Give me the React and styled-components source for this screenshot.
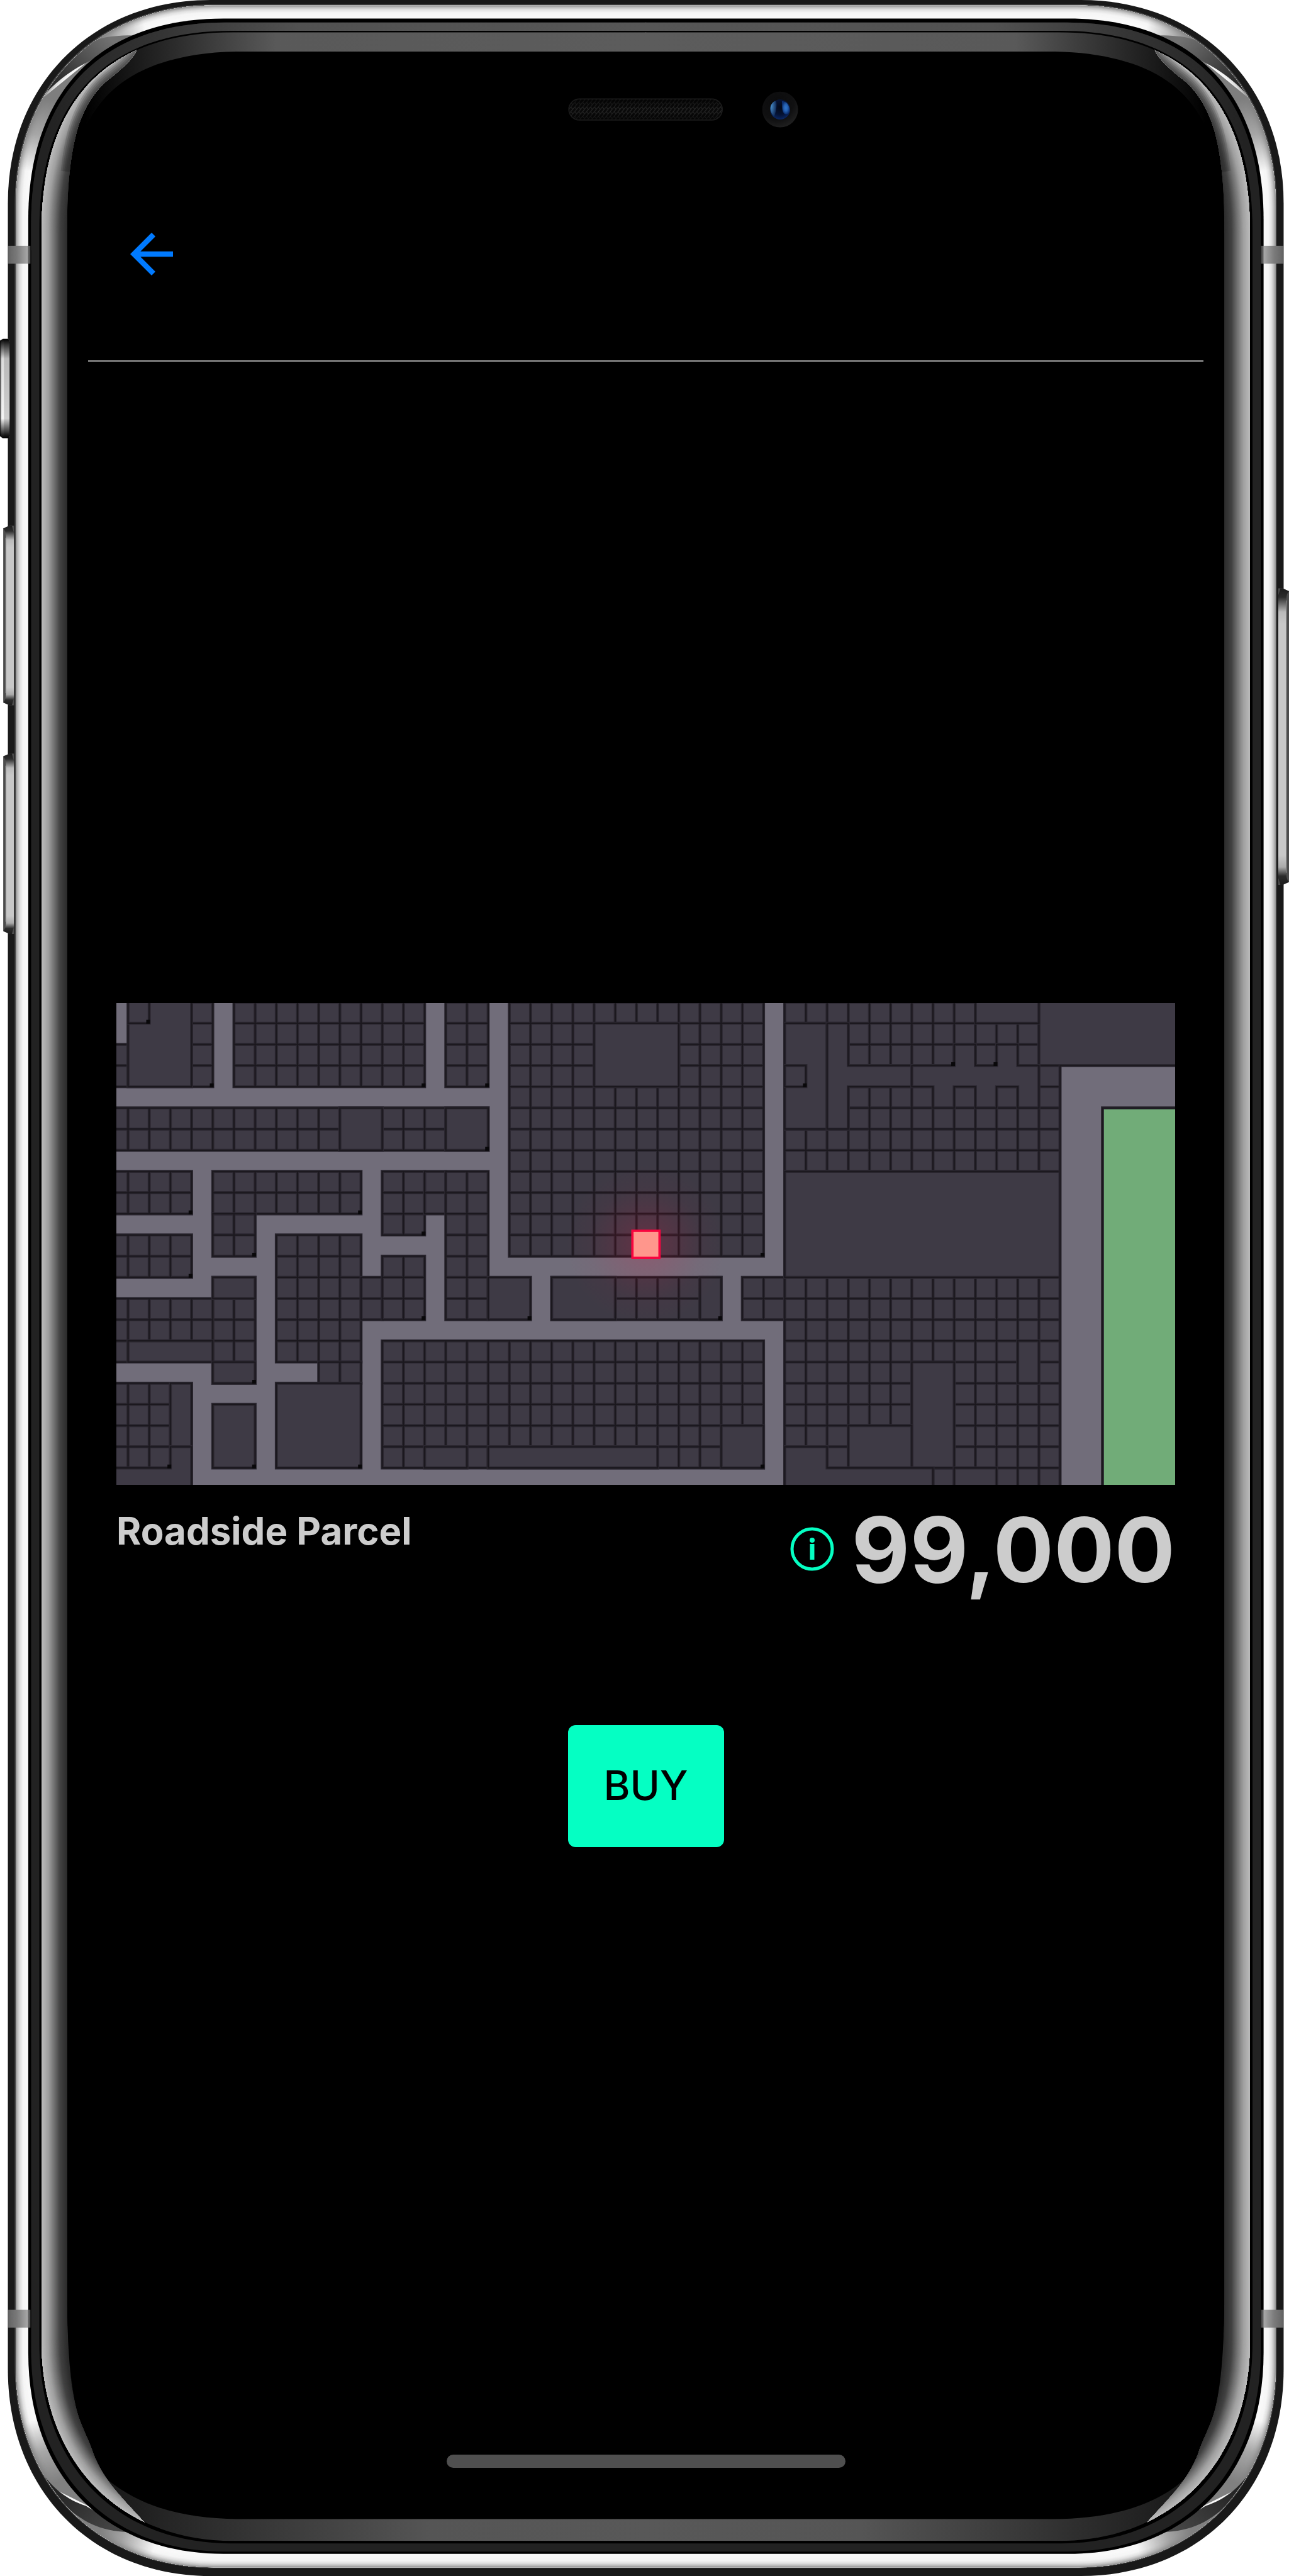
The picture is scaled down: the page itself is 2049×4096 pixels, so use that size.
import React from "react";
import styled, { createGlobalStyle } from "styled-components";

const GlobalStyle = createGlobalStyle`
  * { box-sizing: border-box; }
  body { margin: 0; background: #ffffff; font-family: Inter, "Liberation Sans", sans-serif; }
`;

const Device = styled.div`
  position: relative;
  width: 100%;
  min-height: 100vh;
  display: flex;
  overflow: hidden;
`;

const BezelArt = styled.svg`
  position: absolute;
  inset: 0;
  width: 100%;
  height: 100%;
`;

const Screen = styled.div`
  position: relative;
  flex: 1;
  display: flex;
  flex-direction: column;
  padding: 0 136px 172px 140px;
`;

const Header = styled.header`
  display: flex;
  padding: 353px 50px 118px;
  border-bottom: 2px solid #a2a2a2;
`;

const BackButton = styled.button`
  display: block;
  width: 102px;
  height: 102px;
  padding: 0;
  border: 0;
  background: none;
  color: #007aff;
  cursor: pointer;

  svg { display: block; width: 100%; height: 100%; }
`;

const Main = styled.main`
  flex: 1;
  display: flex;
  flex-direction: column;
  justify-content: center;
  padding: 54px 45px 0;
`;

const MapArt = styled.svg`
  display: block;
  width: 100%;
  height: auto;
`;

const Summary = styled.div`
  display: flex;
  justify-content: space-between;
  align-items: flex-start;
  padding-top: 16px;
`;

const ParcelName = styled.h1`
  margin: 0;
  padding-top: 21px;
  color: #cccccc;
  font-size: 60px;
  font-weight: 700;
  line-height: 72px;
`;

const PriceGroup = styled.div`
  display: flex;
  align-items: center;
  gap: 27px;
`;

const InfoButton = styled.button`
  width: 72px;
  height: 72px;
  padding: 0;
  border: 0;
  background: none;
  color: #05ffc3;
  cursor: pointer;

  svg { display: block; width: 100%; height: 100%; }
`;

const Price = styled.span`
  color: #cccccc;
  font-size: 143px;
  font-weight: 700;
  line-height: 174px;
`;

const BuyButton = styled.button`
  align-self: center;
  margin-top: 192px;
  width: 248px;
  height: 194px;
  padding: 0 0 2px;
  border: 0;
  border-radius: 12px;
  background: #05ffc3;
  color: #000000;
  font-family: inherit;
  font-size: 64px;
  font-weight: 500;
  line-height: 76px;
  cursor: pointer;
`;

const HomeIndicator = styled.div`
  align-self: center;
  width: 634px;
  height: 21px;
  border-radius: 11px;
  background: #4f4f4f;
`;

/* ---------- parcel map, drawn in grid-cell units ---------- */

const ROAD = "#716d7a";
const LAND = "#3e3a45";

const gridBlocks = [
  [-1, -1, 4, 3], [5, -1, 14, 3], [15, -1, 17, 3], [-1, 4, 17, 6],
  [-1, 7, 3, 9], [4, 7, 11, 9], [4, 9, 6, 11], [12, 7, 14, 10], [14, 7, 15, 9], [15, 7, 17, 14],
  [-1, 10, 3, 12], [4, 12, 6, 17], [-1, 13, 4, 16],
  [7, 10, 11, 16], [9, 16, 11, 17], [11, 12, 12, 14], [12, 11, 14, 14],
  [-1, 17, 3, 23], [12, 15, 30, 21], [18, -1, 30, 11], [20, 12, 28, 14],
  [29, 12, 31, 14], [31, -1, 44, 23],
];

const box = (a, b, c, d) => `M${a} ${b}H${c}V${d}H${a}Z`;

const merged = [
  box(0, -2, 3, 3), box(0, -2, 1, 0),
  box(10, 4, 12, 6), box(15, 4, 17, 6), box(17, 12, 19, 14),
  box(4, 12, 6, 13), box(0, 15, 4, 16), box(4, 16, 6, 17),
  box(7, 17, 11, 21), box(2, 17, 3, 20), "M-2 21H2V20H3V24H-2Z", box(4, 18, 6, 21),
  box(14, 20, 16, 21), box(17, 20, 25, 21), box(28, 19, 30, 21),
  box(22, 0, 26, 3), box(20, 12, 23, 14), box(27, 12, 28, 14),
  box(43, -2, 51, 2), box(40, -2, 43, 0),
  box(31, 0, 33, 5), box(31, 2, 32, 3),
  "M33 0H34V2H37V3H34V5H33Z",
  "M37 2H39V1H40V2H41V1H42V2H43V4H42V3H41V4H40V3H39V4H38V3H37Z",
  box(31, 7, 44, 12),
  box(37, 16, 39, 21), box(42, 15, 43, 17), box(34, 19, 37, 21),
  "M31 20H33V21H38V24H31Z", box(39, 21, 41, 24),
];

const notches = [
  [1, 0], [4, 3], [14, 3], [17, 3], [17, 6], [3, 9], [11, 9], [14, 10], [6, 11], [3, 12],
  [14, 14], [6, 17], [2, 21], [6, 21], [11, 21], [30, 11], [19, 14], [28, 14], [30, 21],
  [32, 3], [39, 2], [41, 2],
];

const gridPath = ([x0, y0, x1, y1]) => {
  let d = "";
  for (let x = x0; x <= x1; x += 1) d += `M${x} ${y0}V${y1}`;
  for (let y = y0; y <= y1; y += 1) d += `M${x0} ${y}H${x1}`;
  return d;
};

function Lines({ d, fill = "none" }) {
  return (
    <>
      <path d={d} fill={fill} stroke="#2b2730" strokeWidth="0.14" strokeLinecap="square" />
      <path d={d} fill="none" stroke="#1b181e" strokeWidth="0.06" strokeLinecap="square" />
    </>
  );
}

function ParcelMap() {
  return (
    <MapArt viewBox="-0.55 -0.95 49.98 22.77" role="img" aria-label="Parcel location map">
      <defs>
        <radialGradient id="glow">
          <stop offset="0" stopColor="#ff1045" stopOpacity="0.2" />
          <stop offset="0.35" stopColor="#f01045" stopOpacity="0.11" />
          <stop offset="0.7" stopColor="#e01045" stopOpacity="0.03" />
          <stop offset="1" stopColor="#e01045" stopOpacity="0" />
        </radialGradient>
      </defs>
      <rect x="-1" y="-1" width="51" height="23" fill={ROAD} />
      {gridBlocks.map((b) => (
        <rect key={b.join()} x={b[0]} y={b[1]} width={b[2] - b[0]} height={b[3] - b[1]} fill={LAND} />
      ))}
      {gridBlocks.map((b) => <Lines key={b.join()} d={gridPath(b)} />)}
      {merged.map((d) => <Lines key={d} d={d} fill={LAND} />)}
      <path d="M-1 -1H-0.07V0.93H-1Z" fill={ROAD} />
      <path d="M44 2H51V4H46V23H44Z" fill={ROAD} />
      <Lines d="M44 23V2H51" />
      <rect x="46" y="4" width="5" height="20" fill="#71ac78" />
      <Lines d="M46 23V4H51" />
      {notches.map(([x, y]) => (
        <rect key={`${x},${y}`} x={x - 0.14} y={y - 0.16} width="0.18" height="0.18" fill="#09080a" />
      ))}
      <circle cx="24.45" cy="10.44" r="3.8" fill="url(#glow)" />
      <rect x="23.81" y="9.8" width="1.28" height="1.28" fill="#ff968c" stroke="#f8053f" strokeWidth="0.11" />
    </MapArt>
  );
}

/* ---------- phone body ---------- */

const shell = (l, t, r, b, rx, ryTop, ryBottom, topFullness, bottomFullness) => {
  const kt = 1 - topFullness;
  const kb = 1 - bottomFullness;
  return [
    `M${l + rx} ${t}H${r - rx}`,
    `C${r - rx * kt} ${t} ${r} ${t + ryTop * kt} ${r} ${t + ryTop}`,
    `V${b - ryBottom}`,
    `C${r} ${b - ryBottom * kb} ${r - rx * kb} ${b} ${r - rx} ${b}`,
    `H${l + rx}`,
    `C${l + rx * kb} ${b} ${l} ${b - ryBottom * kb} ${l} ${b - ryBottom}`,
    `V${t + ryTop}`,
    `C${l} ${t + ryTop * kt} ${l + rx * kt} ${t} ${l + rx} ${t}Z`,
  ].join("");
};

const outer = shell(22, 0, 3587, 7199, 566, 568, 578, 0.585, 0.585);
const steelRim = shell(41, 12, 3568, 7177, 556, 560, 568, 0.59, 0.59);
const steel = shell(44, 15, 3565, 7175, 554, 560, 566, 0.59, 0.59);
const steelInner = shell(79, 52, 3531, 7137, 546, 562, 562, 0.635, 0.61);
const ring = shell(87, 63, 3523, 7131, 542, 560, 562, 0.64, 0.605);
const ringInner = shell(110, 86, 3500, 7108, 536, 556, 560, 0.65, 0.605);
const glass = shell(116, 90, 3493, 7101, 536, 560, 560, 0.66, 0.6);

const MIRROR = "translate(3609 0) scale(-1 1)";

const gray = (v) => `rgb(${v},${v},${v})`;
/* grey levels from the inner end of a bevel out to its edge */
const ramp = (stops, n) =>
  Array.from({ length: n }, (_, i) => {
    const t = 1 - i / (n - 1);
    const j = Math.max(1, stops.findIndex((s) => s[0] >= t));
    const [t0, v0] = stops[j - 1];
    const [t1, v1] = stops[j];
    return Math.round(v0 + ((v1 - v0) * (t - t0)) / (t1 - t0));
  });

const steelRamp = ramp([[0, 150], [0.15, 190], [0.35, 225], [0.6, 245], [1, 249]], 24);
const sheenRamp = ramp([[0, 186], [0.25, 160], [0.5, 112], [0.72, 66], [1, 44]], 48);

function NestedStrokes({ d, depth, values }) {
  return values.map((v, i) => (
    <path key={i} d={d} fill="none" stroke={gray(v)} strokeWidth={2 * depth * (1 - i / values.length)} />
  ));
}

const sheenTopEdge = "M384 134C378 158 345 190 302 223C262 255 230 310 214 370C205 405 199 440 195 480";
const sheenSide =
  "M100 3600V90H384V134C378 158 345 190 302 223C262 255 230 310 214 370C196 440 188 520 188 620V6440C189 6560 196 6690 222 6760C240 6808 250 6822 262 6860C290 6930 330 6970 411 7057L400 7110H100Z";

const screenGlass =
  "M660 144H2949C3077 146 3190 175 3261 226C3370 300 3421 440 3421 640V6440C3421 6700 3380 6850 3308 6930C3220 7010 3080 7040 2946 7040H663C520 7038 400 7010 301 6930C230 6850 188 6700 188 6440V640C188 440 239 300 348 226C420 175 530 146 660 144Z";

function SteelCorner() {
  return (
    <>
      <path d="M30 490H260V160L100 290L30 300Z" fill="url(#steelTopSide)" />
      <path d="M420 0V140H230L150 230L120 200L200 40Z" fill="url(#steelTopEdge)" />
      <path d="M90 300C130 255 180 205 240 176L380 99C300 98 262 108 225 135C190 160 150 200 110 240Z" fill="url(#facetTop)" />
      <path d="M30 6750H300V7030L120 6940L30 6900Z" fill="url(#steelBottomSide)" />
      <path d="M440 7199V7040H230L170 6990L150 7040L240 7180Z" fill="url(#steelBottomEdge)" />
      <path d="M112 6905C150 6955 185 6985 240 7003L360 7076C280 7075 225 7045 176 6996Z" fill="url(#facetBottom)" />
    </>
  );
}

function Sheen() {
  return (
    <g clipPath="url(#sheenClip)">
      <path d={sheenSide} fill="#2c2c2c" />
      <NestedStrokes d={glass} depth={72} values={sheenRamp} />
      {[50, 40, 30, 20, 10].map((w) => (
        <path key={w} d={sheenTopEdge} fill="none" stroke="#2c2c2c" strokeOpacity="0.18" strokeWidth={w} />
      ))}
    </g>
  );
}

function SideButton({ x, y, height, flip }) {
  const w = 30;
  return (
    <g transform={flip ? `translate(${x + w} ${y}) scale(-1 1)` : `translate(${x} ${y})`}>
      <path d={`M0 8L18 0H${w}V${height}H18L0 ${height - 8}Z`} fill="#4c4c4c" />
      <path d={`M0 8C6 14 8 24 8 40V${height - 40}C8 ${height - 24} 6 ${height - 14} 0 ${height - 8}L18 ${height}H24L30 ${height - 20}V20L24 0H18Z`} fill="url(#keyFace)" />
      <rect x="6" y="34" width="2" height={height - 68} fill="#8c8c8c" />
    </g>
  );
}

function Bezel() {
  return (
    <BezelArt viewBox="0 0 3602 7199" preserveAspectRatio="none" aria-hidden="true">
      <defs>
        <clipPath id="steelClip"><path d={steel} /></clipPath>
        <clipPath id="glassClip"><path d={glass} /></clipPath>
        <clipPath id="sheenClip"><path d={sheenSide} /></clipPath>
        <clipPath id="topLeft"><rect x="0" y="0" width="1806" height="700" /></clipPath>
        <linearGradient id="steelTopSide" gradientUnits="userSpaceOnUse" x1="85" y1="480" x2="135" y2="275">
          <stop offset="0" stopColor="#808080" stopOpacity="0" />
          <stop offset="0.5" stopColor="#848484" stopOpacity="0.7" />
          <stop offset="1" stopColor="#7e7e7e" />
        </linearGradient>
        <linearGradient id="steelTopEdge" gradientUnits="userSpaceOnUse" x1="400" y1="60" x2="240" y2="110">
          <stop offset="0" stopColor="#808080" stopOpacity="0" />
          <stop offset="0.6" stopColor="#848484" stopOpacity="0.75" />
          <stop offset="1" stopColor="#7e7e7e" />
        </linearGradient>
        <linearGradient id="facetTop" gradientUnits="userSpaceOnUse" x1="120" y1="270" x2="300" y2="100">
          <stop offset="0" stopColor="#191919" />
          <stop offset="0.4" stopColor="#3a3a3a" />
          <stop offset="1" stopColor="#727272" />
        </linearGradient>
        <linearGradient id="steelBottomSide" gradientUnits="userSpaceOnUse" x1="90" y1="6765" x2="150" y2="6940">
          <stop offset="0" stopColor="#808080" stopOpacity="0" />
          <stop offset="0.5" stopColor="#848484" stopOpacity="0.7" />
          <stop offset="1" stopColor="#808080" />
        </linearGradient>
        <linearGradient id="steelBottomEdge" gradientUnits="userSpaceOnUse" x1="430" y1="7125" x2="280" y2="7070">
          <stop offset="0" stopColor="#808080" stopOpacity="0" />
          <stop offset="0.6" stopColor="#868686" stopOpacity="0.75" />
          <stop offset="1" stopColor="#808080" />
        </linearGradient>
        <linearGradient id="facetBottom" gradientUnits="userSpaceOnUse" x1="130" y1="6930" x2="300" y2="7080">
          <stop offset="0" stopColor="#1e1e1e" />
          <stop offset="1" stopColor="#444444" />
        </linearGradient>
        <linearGradient id="ringTop" gradientUnits="userSpaceOnUse" x1="130" y1="0" x2="1804" y2="0">
          <stop offset="0" stopColor="#222222" />
          <stop offset="0.2" stopColor="#353535" />
          <stop offset="0.42" stopColor="#515151" />
          <stop offset="1" stopColor="#565656" />
        </linearGradient>
        <linearGradient id="glassTop" gradientUnits="userSpaceOnUse" x1="240" y1="0" x2="1804" y2="0">
          <stop offset="0" stopColor="#000000" />
          <stop offset="0.09" stopColor="#1a1a1a" />
          <stop offset="0.18" stopColor="#313131" />
          <stop offset="0.34" stopColor="#595959" />
          <stop offset="1" stopColor="#5c5c5c" />
        </linearGradient>
        <linearGradient id="glassBottom" gradientUnits="userSpaceOnUse" x1="300" y1="0" x2="1804" y2="0">
          <stop offset="0" stopColor="#181818" />
          <stop offset="0.1" stopColor="#242424" />
          <stop offset="0.33" stopColor="#3b3b3b" />
          <stop offset="0.6" stopColor="#555555" />
          <stop offset="1" stopColor="#585858" />
        </linearGradient>
        <linearGradient id="keyFace" x1="0" y1="0" x2="0" y2="1">
          <stop offset="0" stopColor="#1c1c1c" />
          <stop offset="0.03" stopColor="#2c2c2c" />
          <stop offset="0.08" stopColor="#bababa" />
          <stop offset="0.12" stopColor="#c8c8c8" />
          <stop offset="0.9" stopColor="#c8c8c8" />
          <stop offset="0.94" stopColor="#aaaaaa" />
          <stop offset="0.97" stopColor="#2c2c2c" />
          <stop offset="1" stopColor="#1c1c1c" />
        </linearGradient>
        <linearGradient id="switchFace" x1="0" y1="0" x2="1" y2="0">
          <stop offset="0" stopColor="#555555" />
          <stop offset="0.12" stopColor="#8c8c8c" />
          <stop offset="0.16" stopColor="#f4f4f4" />
          <stop offset="0.38" stopColor="#f4f4f4" />
          <stop offset="0.42" stopColor="#cecece" />
          <stop offset="0.85" stopColor="#cecece" />
          <stop offset="1" stopColor="#555555" />
        </linearGradient>
        <linearGradient id="switchShade" x1="0" y1="0" x2="0" y2="1">
          <stop offset="0" stopColor="#000000" />
          <stop offset="0.2" stopColor="#000000" stopOpacity="0.1" />
          <stop offset="0.8" stopColor="#000000" stopOpacity="0" />
          <stop offset="0.96" stopColor="#000000" stopOpacity="0.85" />
          <stop offset="1" stopColor="#000000" />
        </linearGradient>
        <linearGradient id="antenna" x1="0" y1="0" x2="1" y2="0">
          <stop offset="0" stopColor="#646464" />
          <stop offset="0.4" stopColor="#7a7a7a" />
          <stop offset="0.88" stopColor="#a8a8a8" />
          <stop offset="0.9" stopColor="#606060" />
          <stop offset="1" stopColor="#4c4c4c" />
        </linearGradient>
        <linearGradient id="speakerShade" x1="0" y1="0" x2="0" y2="1">
          <stop offset="0" stopColor="#000000" stopOpacity="0.6" />
          <stop offset="0.55" stopColor="#000000" stopOpacity="0" />
          <stop offset="1" stopColor="#000000" stopOpacity="0.6" />
        </linearGradient>
        <pattern id="mesh" width="11" height="13" patternUnits="userSpaceOnUse">
          <rect width="11" height="13" fill="#0a0a0a" />
          <path d="M0 0L5.5 6.5L11 0M0 13L5.5 6.5" fill="none" stroke="#303030" strokeWidth="1.8" />
        </pattern>
        <radialGradient id="housing" cx="0.4" cy="0.3" r="0.8">
          <stop offset="0" stopColor="#0b0b0c" />
          <stop offset="0.6" stopColor="#101011" />
          <stop offset="1" stopColor="#252525" />
        </radialGradient>
        <radialGradient id="lens" cx="0.5" cy="0.4" r="0.65">
          <stop offset="0" stopColor="#020817" />
          <stop offset="0.55" stopColor="#051233" />
          <stop offset="1" stopColor="#0b2a6c" />
        </radialGradient>
        <radialGradient id="lensLeft" cx="0.1" cy="0.3" r="0.9">
          <stop offset="0" stopColor="#4a8fcb" />
          <stop offset="1" stopColor="#0c2450" />
        </radialGradient>
        <radialGradient id="lensRight">
          <stop offset="0" stopColor="#2f76cf" />
          <stop offset="0.5" stopColor="#2561b2" />
          <stop offset="1" stopColor="#0c2f70" />
        </radialGradient>
      </defs>

      <path d={outer} fill="#191919" />
      <path d={steelRim} fill="#444444" />
      <g clipPath="url(#steelClip)">
        <path d={steel} fill="#f8f8f8" />
        <NestedStrokes d={steel} depth={34} values={steelRamp} />
        <SteelCorner />
        <g transform={MIRROR}><SteelCorner /></g>
      </g>
      <path d={steelInner} fill="#000000" />
      <path d={ring} fill="#222222" />
      {[undefined, MIRROR].map((t) => (
        <g key={String(t)} transform={t} clipPath="url(#topLeft)">
          <path d={ring} fill="url(#ringTop)" />
        </g>
      ))}
      <path d={ringInner} fill="#000000" />
      <g clipPath="url(#glassClip)">
        {[undefined, MIRROR].map((t) => (
          <g key={String(t)} transform={t}>
            <rect x="100" y="80" width="1706" height="800" fill="url(#glassTop)" />
            <rect x="100" y="6500" width="1706" height="620" fill="url(#glassBottom)" />
          </g>
        ))}
        <path d={screenGlass} fill="#000000" />
        <Sheen />
        <g transform={MIRROR}><Sheen /></g>
      </g>

      {[687, 6455].map((y) => (
        <React.Fragment key={y}>
          <rect x="23" y={y} width="62" height="50" fill="url(#antenna)" />
          <rect x="23" y={y} width="62" height="50" fill="url(#antenna)" transform={MIRROR} />
        </React.Fragment>
      ))}

      <path d="M0 952L8 947H24Q28 960 28 975V1200Q28 1215 24 1225H8L0 1219Z" fill="url(#switchFace)" />
      <path d="M0 952L8 947H24Q28 960 28 975V1200Q28 1215 24 1225H8L0 1219Z" fill="url(#switchShade)" />
      <SideButton x={9} y={1469} height={502} />
      <SideButton x={9} y={2106} height={504} />
      <SideButton x={3572} y={1644} height={829} flip />

      <rect x="1588" y="275" width="432" height="62" rx="31" fill="#1a1a1a" />
      <rect x="1591" y="278" width="426" height="56" rx="28" fill="url(#mesh)" />
      <rect x="1591" y="278" width="426" height="56" rx="28" fill="url(#speakerShade)" />
      <circle cx="2180" cy="306" r="50" fill="url(#housing)" />
      <circle cx="2180" cy="306" r="28" fill="url(#lens)" />
      <path d="M2169 283C2172 296 2168 312 2164 326C2150 314 2148 294 2164 283Z" fill="url(#lensLeft)" />
      <path d="M2185 283C2198 282 2206 294 2207 308C2206 318 2200 320 2194 319C2184 314 2186 298 2185 283Z" fill="url(#lensRight)" />
    </BezelArt>
  );
}

export default function App() {
  return (
    <>
      <GlobalStyle />
      <Device>
        <Bezel />
        <Screen>
          <Header>
            <BackButton type="button" aria-label="Back">
              <svg viewBox="0 0 24 24" fill="currentColor">
                <path d="M20 11H7.83l5.59-5.59L12 4l-8 8 8 8 1.41-1.41L7.83 13H20v-2z" />
              </svg>
            </BackButton>
          </Header>
          <Main>
            <ParcelMap />
            <Summary>
              <ParcelName>Roadside Parcel</ParcelName>
              <PriceGroup>
                <InfoButton type="button" aria-label="Price information">
                  <svg viewBox="0 0 72 72" fill="none" stroke="currentColor">
                    <circle cx="36" cy="35" r="32" strokeWidth="5" />
                    <circle cx="36" cy="21" r="4" fill="currentColor" stroke="none" />
                    <path d="M36 27V52" strokeWidth="7" />
                  </svg>
                </InfoButton>
                <Price>99,000</Price>
              </PriceGroup>
            </Summary>
            <BuyButton type="button">BUY</BuyButton>
          </Main>
          <HomeIndicator />
        </Screen>
      </Device>
    </>
  );
}
